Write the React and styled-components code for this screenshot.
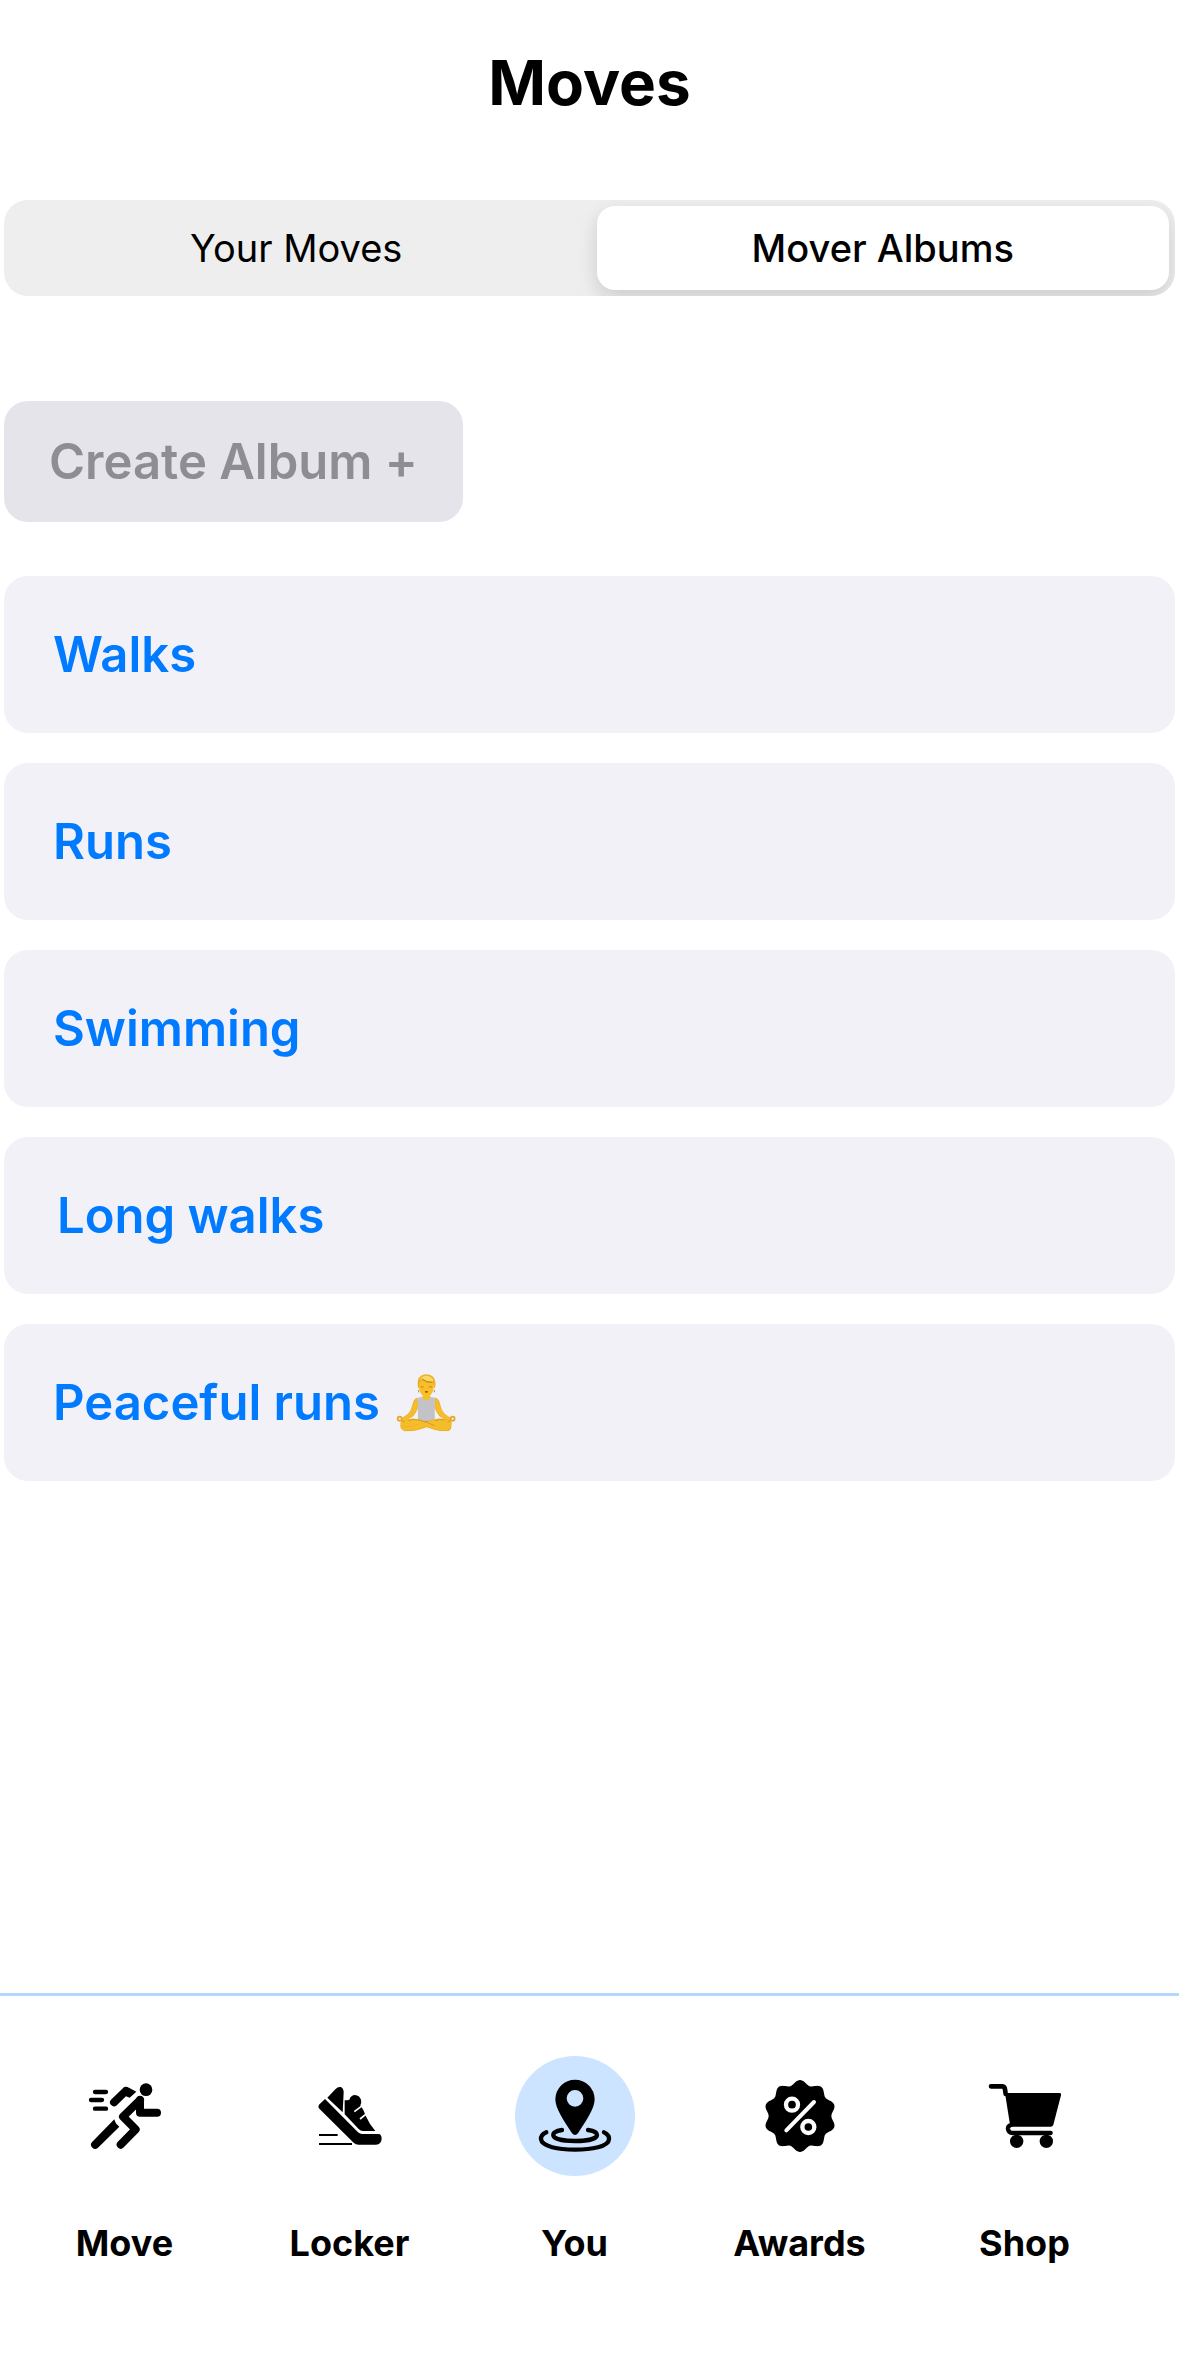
import React, { useState } from "react";
import styled, { createGlobalStyle } from "styled-components";

const GlobalStyle = createGlobalStyle`
  *, *::before, *::after { box-sizing: border-box; }
  body {
    margin: 0;
    background: #fff;
    color: #000;
    font-family: Inter, "Liberation Sans", sans-serif;
  }
  button { font-family: inherit; }
`;

const Page = styled.div`
  display: flex;
  flex-direction: column;
  min-height: 100vh;
`;

const Header = styled.header`
  padding: 43px 0 77px;
  text-align: center;
`;

const Title = styled.h1`
  margin: 0;
  font-size: 62px;
  line-height: 80px;
  font-weight: 700;
`;

const Main = styled.main`
  display: flex;
  flex-direction: column;
  flex: 1;
  padding: 0 4px;
`;

const Segments = styled.div`
  display: grid;
  grid-template-columns: 1fr 1fr;
  gap: 14px;
  padding: 6px;
  border-radius: 24px;
  background: #eeeeef;
  overflow: hidden;
`;

const Segment = styled.button`
  height: 84px;
  padding: 0;
  border: 0;
  border-radius: 18px;
  color: #000;
  font-size: 38px;
  font-weight: ${(p) => (p.$selected ? 500 : 400)};
  background: ${(p) => (p.$selected ? "#fff" : "transparent")};
  box-shadow: ${(p) => (p.$selected ? "0 8px 20px rgba(0, 0, 0, 0.14)" : "none")};
`;

const CreateButton = styled.button`
  align-self: flex-start;
  height: 121px;
  margin: 105px 0 54px;
  padding: 0 45px;
  border: 0;
  border-radius: 24px;
  background: #e5e4ea;
  color: #8e8d93;
  font-size: 49px;
  font-weight: 600;
`;

const AlbumList = styled.ul`
  display: flex;
  flex-direction: column;
  gap: 30px;
  margin: 0;
  padding: 0;
  list-style: none;
`;

const AlbumLink = styled.a`
  display: flex;
  align-items: center;
  gap: 16px;
  height: 157px;
  padding: 0 49px;
  border-radius: 24px;
  background: #f2f1f8;
  color: #007aff;
  font-size: 49px;
  font-weight: 600;
  text-decoration: none;
  white-space: pre;
`;

const EmojiArt = styled.svg`
  width: 60px;
  height: 58px;
`;

const TabBar = styled.nav`
  display: grid;
  grid-template-columns: repeat(5, 1fr);
  height: 383px;
  padding: 60px 42px 0 12px;
  border-top: 3px solid #b3d7ff;
`;

const TabLink = styled.a`
  display: flex;
  flex-direction: column;
  align-items: center;
  gap: 43px;
  color: #000;
  font-size: 36px;
  line-height: 48px;
  font-weight: 700;
  text-decoration: none;
`;

const IconDisc = styled.span`
  width: 120px;
  height: 120px;
  border-radius: 50%;
  background: ${(p) => (p.$active ? "#cce4ff" : "transparent")};
`;

const Glyph = styled.svg`
  display: block;
  width: 100%;
  height: 100%;
`;

function MoveIcon() {
  return (
    <Glyph viewBox="-15 -12 360 360" aria-hidden="true">
      <circle cx="228" cy="89" r="19" />
      <g fill="none" stroke="#000" strokeLinecap="round" strokeLinejoin="round">
        <path strokeWidth="13" d="M75 96H108M63 120H96M75 146H108" />
        <path strokeWidth="24" d="M132 127L167 93" />
        <path strokeWidth="24" d="M210 120L159 170L197 208L152 254" />
        <path strokeWidth="24" d="M210 120V158H261" />
      </g>
      <path d="M160 84Q168 78 177 83L199 95L179 113L166 108Z" />
      <path d="M208 120L176 166L198 146Z" />
      <path d="M133 178L67 245A12 12 0 0 0 84 263L148 200Q136 192 133 178Z" />
    </Glyph>
  );
}

function ShoeIcon() {
  return (
    <Glyph viewBox="-30 -12 360 360" aria-hidden="true">
      <path d="M82 113L106 88Q114 79 122 81Q131 85 131 97L128 157Z" />
      <path d="M75 117L57 134Q53 140 58 146L161 248Q167 254 176 254H228Q244 253 245 236Q244 222 236 222H186Q180 222 174 217Z" />
      <path d="M134 121Q142 121 148 119Q153 105 165 105Q178 106 183 119Q185 129 181 136L190 150L197 167Q208 192 226 213H188Q182 213 176 207L134 163Z" />
      <path d="M163 155L188 136M180 177L201 160" fill="none" stroke="#fff" strokeWidth="5" />
      <path d="M57 225H113M57 252H156" fill="none" stroke="#000" strokeWidth="6" />
    </Glyph>
  );
}

function PinIcon() {
  return (
    <Glyph viewBox="30 33 360 360" aria-hidden="true">
      <path
        fillRule="evenodd"
        d="M151 163A59 59 0 1 1 269 163C269 190 243 228 219 265Q210 275 201 265C177 228 151 190 151 163ZM185 160A25 25 0 1 0 235 160A25 25 0 1 0 185 160Z"
      />
      <g fill="none" stroke="#000" strokeWidth="13" strokeLinecap="round">
        <path d="M171 255C150 258 144 265 145 271C147 283 180 288 210 288S275 283 276 270C276 262 266 257 249 255" />
        <path d="M124 262C113 267 107 275 108 283C111 305 160 314 210 314S310 305 312 283C313 275 307 267 297 262" />
      </g>
    </Glyph>
  );
}

const badgeOutline = Array.from({ length: 180 }, (_, i) => {
  const angle = (i * Math.PI) / 90;
  const radius = 101 + 7 * Math.cos(10 * angle);
  return `${(150 + radius * Math.sin(angle)).toFixed(1)},${(168 - radius * Math.cos(angle)).toFixed(1)}`;
}).join(" ");

function BadgeIcon() {
  return (
    <Glyph viewBox="-30 -12 360 360" aria-hidden="true">
      <polygon points={badgeOutline} />
      <g fill="none" stroke="#fff" strokeLinecap="round">
        <circle cx="126" cy="134" r="18" strokeWidth="13" />
        <circle cx="175" cy="201" r="18" strokeWidth="13" />
        <path strokeWidth="12" d="M109 211L192 126" />
      </g>
    </Glyph>
  );
}

function CartIcon() {
  return (
    <Glyph viewBox="-30 -12 360 360" aria-hidden="true">
      <path d="M90 99H255Q259 100 258 106L235 194Q233 200 227 200H106Z" />
      <g fill="none" stroke="#000" strokeLinecap="round">
        <path strokeWidth="14" d="M48 79H82Q89 80 90 88L92 102" />
        <path strokeWidth="13" d="M108 195Q98 198 99 207Q101 219 112 219H227" />
      </g>
      <circle cx="125" cy="244" r="20" />
      <circle cx="214" cy="244" r="20" />
    </Glyph>
  );
}

function LotusEmoji() {
  return (
    <EmojiArt viewBox="41 40 180 174" role="img" aria-label="person in lotus position">
      <path d="M122 92H142V112H122Z" fill="#f0b61c" />
      <path d="M104 112Q94 116 92 130Q88 150 78 160L58 174L65 182L92 166Q101 156 108 136Z" fill="#f7bd28" stroke="#e2a41f" strokeWidth="2" />
      <path d="M160 112Q170 116 172 130Q176 150 186 160L206 174L199 182L172 166Q163 156 156 136Z" fill="#f7bd28" stroke="#e2a41f" strokeWidth="2" />
      <path d="M106 111Q114 110 119 109Q132 122 144 109Q150 110 158 111L157 184H107Z" fill="#c3c3c7" />
      <path d="M118 108Q132 130 146 108L140 105H124Z" fill="#f7c02b" />
      <path d="M125 181H140L143 190L133 196L122 190Z" fill="#77777d" />
      <path d="M55 184Q78 171 105 175L165 193Q190 204 205 193Q210 206 198 211Q168 212 133 199Q100 213 70 211Q53 207 55 184Z" fill="#eeae20" />
      <path d="M207 184Q186 171 158 176L103 191Q76 202 55 193Q53 207 68 211Q101 212 133 198Q168 213 194 210Q210 206 207 184Z" fill="#f6bd2a" stroke="#dc9c1c" strokeWidth="1" />
      <path d="M55 184Q78 171 105 176L133 187L103 191Q76 202 55 193Z" fill="#f6bd2a" />
      <path d="M106 177Q136 184 157 195M158 180Q172 174 186 178M78 180Q92 174 105 178" fill="none" stroke="#c88a17" strokeWidth="2" />
      <g fill="none" stroke="#e5a523" strokeWidth="5">
        <circle cx="52" cy="174" r="6" />
        <circle cx="211" cy="174" r="6" />
        <path d="M58 180L67 184M205 180L196 184" />
      </g>
      <path d="M109 67Q109 107 132 108Q155 107 155 67Q148 50 132 50Q116 50 109 67Z" fill="#f8bf2a" />
      <path d="M106 76Q103 43 130 41Q162 41 159 76L155 86Q156 70 150 65Q132 69 119 58Q109 68 109 86Z" fill="#eeb01f" />
      <path d="M112 58Q119 44 135 45Q151 49 154 61Q138 65 121 54Z" fill="#fbd968" />
      <path d="M119 55Q132 67 150 65" fill="none" stroke="#a96b0b" strokeWidth="2" />
      <path d="M114 78Q119 81 124 78M139 78Q145 81 150 78" fill="none" stroke="#a56b0b" strokeWidth="2" />
      <path d="M127 93Q132 89 138 93Q132 99 127 93Z" fill="#8f4c0d" />
      <path d="M109 88V95M156 88V95" stroke="#8f5b0b" strokeWidth="2" />
    </EmojiArt>
  );
}

const albums = [
  { name: "Walks" },
  { name: "Runs" },
  { name: "Swimming" },
  { name: "\u200ALong walks" },
  { name: "Peaceful runs", art: <LotusEmoji /> },
];

const tabs = [
  { label: "Move", Icon: MoveIcon },
  { label: "Locker", Icon: ShoeIcon },
  { label: "You", Icon: PinIcon },
  { label: "Awards", Icon: BadgeIcon },
  { label: "Shop", Icon: CartIcon },
];

export default function App() {
  const [segment, setSegment] = useState("Mover Albums");
  return (
    <Page>
      <GlobalStyle />
      <Header>
        <Title>Moves</Title>
      </Header>
      <Main>
        <Segments role="tablist">
          {["Your Moves", "Mover Albums"].map((name) => (
            <Segment
              key={name}
              type="button"
              role="tab"
              aria-selected={segment === name}
              $selected={segment === name}
              onClick={() => setSegment(name)}
            >
              {name}
            </Segment>
          ))}
        </Segments>
        <CreateButton type="button">Create Album +</CreateButton>
        <AlbumList>
          {albums.map(({ name, art }) => (
            <li key={name}>
              <AlbumLink href="#album">
                <span>{name}</span>
                {art}
              </AlbumLink>
            </li>
          ))}
        </AlbumList>
      </Main>
      <TabBar>
        {tabs.map(({ label, Icon }) => (
          <TabLink key={label} href={`#${label.toLowerCase()}`} aria-current={label === "You" ? "page" : undefined}>
            <IconDisc $active={label === "You"}>
              <Icon />
            </IconDisc>
            {label}
          </TabLink>
        ))}
      </TabBar>
    </Page>
  );
}
